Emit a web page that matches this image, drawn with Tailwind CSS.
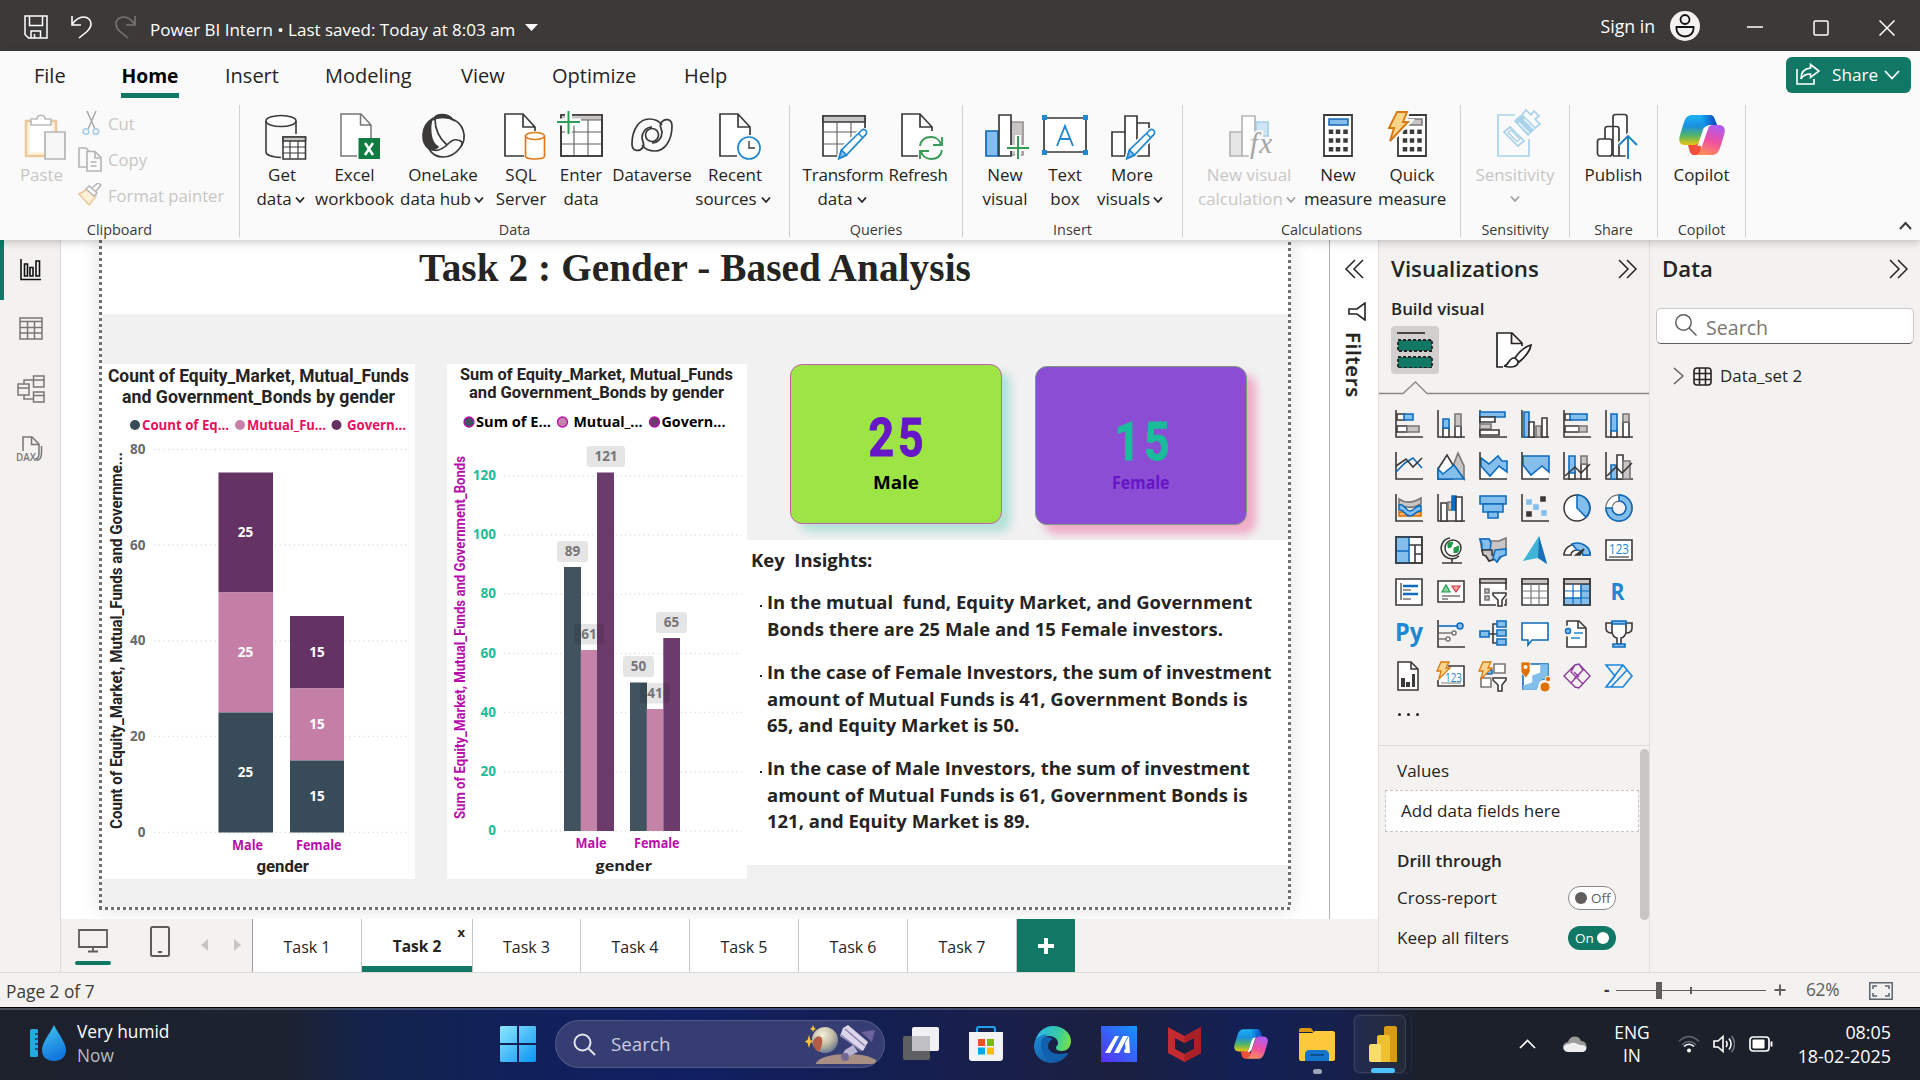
<!DOCTYPE html>
<html lang="en">
<head>
<meta charset="utf-8">
<title>Power BI Intern</title>
<script src="https://cdn.jsdelivr.net/npm/@tailwindcss/browser@4"></script>
</head>
<body class="w-[1920px] h-[1080px] overflow-hidden flex flex-col bg-[#f3f2f1] font-['Open_Sans','Noto_Sans',sans-serif] text-[#252423]">

<svg class="absolute w-0 h-0" aria-hidden="true">
  <defs>
    <linearGradient id="cpA" x1="0" y1="0" x2="0" y2="1"><stop offset="0" stop-color="#1db4f4"/><stop offset=".35" stop-color="#1a8fe0"/><stop offset=".65" stop-color="#52b46a"/><stop offset="1" stop-color="#ffc800"/></linearGradient>
    <linearGradient id="cpB" x1=".6" y1="0" x2=".3" y2="1"><stop offset="0" stop-color="#b05cf0"/><stop offset=".5" stop-color="#ee4fa0"/><stop offset="1" stop-color="#ff8f5a"/></linearGradient>
    <linearGradient id="cpC" x1="0" y1="0" x2="1" y2="0"><stop offset="0" stop-color="#12a8f0"/><stop offset="1" stop-color="#1140c0"/></linearGradient>
    <symbol id="copilot" viewBox="0 0 46 40">
      <path d="M13 0h18c3 0 4 2 5 5l2 5h-7c-4 0-6 2-7 6l-5 14c-1 3-3 0-6 0H6c-5 0-7-4-5-10L5 7C7 2 9 0 13 0z" fill="url(#cpA)"/>
      <path d="M22 0h9c3 0 4 2 5 5l2 5h-7c-3 0-5 1-6 4z" fill="url(#cpC)"/>
      <path d="M33 40H16c3-1 5-3 6-6l7-20c1-3 2-4 5-4h6c5 0 7 4 5 10l-4 13c-2 5-4 7-8 7z" fill="url(#cpB)"/>
      <path d="M16 40c-4 0-5-2-6-6l-1-4h6c3 0 5-2 6-5l1 9c-1 4-3 6-6 6z" fill="#f0503c"/>
      <path d="M24 15c1-3 3-4 6-4-1 1-1 2-2 4l-4 12c-1 3-3 4-6 4 1-1 1-2 2-4z" fill="#fff"/>
    </symbol>
    <symbol id="chev" viewBox="0 0 10 8"><path d="M1 1.500 5 6l4-4.500" fill="none" stroke="currentColor" stroke-width="1.800"/></symbol>
    <symbol id="dbl" viewBox="0 0 20 20"><path d="M1 1l9 9-9 9M9 1l9 9-9 9" fill="none" stroke="currentColor" stroke-width="1.500"/></symbol>
    <symbol id="pencil" viewBox="0 0 32 32"><path d="M1.500 31l2-9L24 2.500c1.500-1.500 3.500-1.500 5 0s1.500 3.500 0 5L9.500 28z" fill="#fafafa" stroke="#fafafa" stroke-width="4"/><path d="M2 30.500l2.500-8.500L24.500 2.500c1.200-1.200 3-1.200 4.200 0s1.200 3 0 4.200L9 27.500z" fill="#fff" stroke="#1e88d0" stroke-width="1.700"/><path d="M2 30.500l2.500-8.500 5 5z" fill="#83beec" stroke="#1e88d0"/><path d="M21.500 5.500l4.500 4.500" stroke="#1e88d0" stroke-width="1.500"/></symbol>
  </defs>
</svg>

<!-- Title bar -->
<header class="h-[51px] shrink-0 bg-[#3b3a38] text-white flex items-center">
  <svg class="w-6 h-6 ml-[24px] mt-[2px]" viewBox="0 0 24 24" fill="none" stroke="#fff" stroke-width="1.500"><path d="M1 1h22v22H4.500L1 19.500zM5.500 1v9.500h13V1M7 23v-7h9.500v7M10.500 23v-4"/></svg>
  <svg class="w-[21px] h-6 ml-[23px] mt-[2px]" viewBox="0 0 21 24" fill="none" stroke="#fff" stroke-width="1.600"><path d="M1 1v9h9M1 9.500C5 4 8 2 12.500 2 17 2 20 5 20 9c0 3-1.500 5-4 7.500L8 23"/></svg>
  <svg class="w-[21px] h-6 ml-[23px] mt-[2px]" viewBox="0 0 21 24" fill="none" stroke="#777675" stroke-width="1.600"><path d="M20 1v9h-9M20 9.500C16 4 13 2 8.500 2 4 2 1 5 1 9c0 3 1.500 5 4 7.500L13 23"/></svg>
  <div class="ml-[14px] mt-[8px] w-[365px] text-[17px] whitespace-nowrap">Power BI Intern • Last saved: Today at 8:03 am</div>
  <svg class="w-[13px] h-[7px] ml-[10px] mt-[4px]" viewBox="0 0 13 7"><path d="M0 0h13L6.500 7z" fill="#fff"/></svg>
  <div class="ml-auto text-[17.700px] mt-[2px]">Sign in</div>
  <svg class="w-[30px] h-[30px] ml-[15px] mt-[1px]" viewBox="0 0 30 30"><circle cx="15" cy="15" r="15" fill="#f3f2f1"/><circle cx="15" cy="8.500" r="4.500" fill="none" stroke="#111" stroke-width="1.800"/><path d="M6.500 16h17v2c0 4-3.500 7.500-8.500 7.500S6.500 22 6.500 18z" fill="none" stroke="#111" stroke-width="1.800"/></svg>
  <svg class="w-4 h-4 ml-[47px] mt-[3px]" viewBox="0 0 16 16"><path d="M0 8h16" stroke="#fff" stroke-width="1.500"/></svg>
  <svg class="w-4 h-4 ml-[50px] mt-[5px]" viewBox="0 0 16 16"><rect x="1" y="1" width="14" height="14" rx="1.500" fill="none" stroke="#fff" stroke-width="1.500"/></svg>
  <svg class="w-4 h-4 ml-[50px] mr-[25px] mt-[5px]" viewBox="0 0 16 16"><path d="M.5.5l15 15M15.500.5l-15 15" stroke="#fff" stroke-width="1.500"/></svg>
</header>

<!-- Ribbon -->
<div class="relative z-20 h-[189px] shrink-0 bg-[#fafafa] shadow-[0_2px_8px_rgba(0,0,0,0.22)] flex flex-col">
  <nav class="h-[51px] flex items-start pt-[11px] text-[20px] leading-[28px] whitespace-nowrap">
    <span class="ml-[34px] w-[87px]">File</span>
    <span class="w-[58px] h-[36px] border-b-[5px] border-[#117865] font-bold text-[19.300px] text-center text-black">Home</span>
    <span class="ml-[46px] w-[100px]">Insert</span>
    <span class="w-[136px]">Modeling</span>
    <span class="w-[91px]">View</span>
    <span class="w-[132px]">Optimize</span>
    <span>Help</span>
    <div class="ml-auto mr-[9px] -mt-[5px] w-[125px] h-9 rounded-md bg-[#117865] text-white flex items-center">
      <svg class="w-6 h-[22px] ml-[10px] -mt-[2px]" viewBox="0 0 24 22" fill="none" stroke="#fff" stroke-width="1.600"><path d="M1 6v15h17v-5"/><path d="M14.500 1.500 23 8l-8.500 6.500V11C10 11 7 12 5 16c0-6 3-10.500 9.500-11z"/></svg>
      <span class="ml-[12px] text-[17.200px]">Share</span>
      <svg class="w-4 h-[10px] ml-[6px]" viewBox="0 0 16 10"><path d="M1 1l7 7.500L15 1" fill="none" stroke="#fff" stroke-width="1.700"/></svg>
    </div>
  </nav>

  <div class="flex-1 flex text-[16.950px] leading-6 whitespace-nowrap">
    <!-- Clipboard -->
    <section class="w-[239px] flex flex-col">
      <div class="flex-1 flex text-[#c8c6c4]">
        <div class="ml-[19px] w-[45px] flex flex-col items-center pt-2">
          <svg class="w-12 h-[53px] overflow-visible" viewBox="0 0 48 53"><path d="M8 11h30v35H8z" fill="#fdf3dc" stroke="#ecc79a" stroke-width="2.500"/><path d="M12 15h22v27H12z" fill="#fff"/><path d="M13 15v-6h6c0-5 8-5 8 0h6v6z" fill="#fff" stroke="#bdbdbd" stroke-width="1.700"/><path d="M27 22h20v27H27z" fill="#f6f6f6" stroke="#b5b5b5" stroke-width="1.700"/></svg>
          <span>Paste</span>
        </div>
        <div class="ml-[14px] flex flex-col pt-[9px] text-[16.650px]">
          <div class="h-[36px] flex items-start gap-[6px]"><svg class="w-5 h-6 ml-1" viewBox="0 0 20 24" fill="none" stroke-width="1.500"><path d="M5 0l8 18M14 0L6 18" stroke="#a8a8a8"/><circle cx="4" cy="20.500" r="2.800" stroke="#a4cfe6"/><circle cx="14" cy="20.500" r="2.800" stroke="#a4cfe6"/></svg><span class="leading-6 mt-px">Cut</span></div>
          <div class="h-[36px] flex items-start gap-[4px]"><svg class="w-6 h-[25px]" viewBox="0 0 24 25" fill="none" stroke="#b5b5b5" stroke-width="1.600"><path d="M9 20H1V1h7l3 3M9 4.500h8l6 6V24H9z"/><path d="M17 5v6h6M12.500 15h6M12.500 19h6"/></svg><span class="leading-6 ml-[2px] mt-px">Copy</span></div>
          <div class="h-[36px] flex items-start gap-[4px]"><svg class="w-6 h-[23px]" viewBox="0 0 24 23" fill="none" stroke-width="1.500"><path d="M1 11l9-5 8 7-7 9z" fill="#fdf0d5" stroke="#ecc79a"/><path d="M8 6l3-3 8 7-3 3zM14 5l6-5 3 2-5 6" stroke="#b5b5b5" fill="#fff"/></svg><span class="leading-6 ml-[2px] mt-px">Format painter</span></div>
        </div>
      </div>
      <div class="h-5 leading-5 text-[14.400px] text-[#3b3a39] text-center">Clipboard</div>
    </section>
    <div class="w-px my-[3px] bg-[#d2d0ce]"></div>

    <!-- Data -->
    <section class="w-[549px] flex flex-col">
      <div class="flex-1 flex pl-[9px]">
        <div class="w-[66px] flex flex-col items-center pt-2"><svg class="w-12 h-[53px] overflow-visible" viewBox="0 0 48 53" fill="none" stroke="#3b3a39" stroke-width="1.600"><path d="M8 11v31c0 3 7 5 15 5.500M38 11v13"/><ellipse cx="23" cy="11" rx="15" ry="5.500" fill="#fff"/><path d="M25 27h22.500v22H25z" fill="#fff"/><path d="M25 27h22.500v4H25z" fill="#c8c6c4"/><path d="M25 37h22M25 43h22M32 31v18M40 31v18" stroke-width="1.200"/></svg><span>Get</span><span class="-ml-[3px]">data<svg class="inline w-[10px] h-2 ml-[3px]"><use href="#chev"/></svg></span></div>
        <div class="w-[79px] flex flex-col items-center pt-2"><svg class="w-12 h-[53px] overflow-visible" viewBox="0 0 48 53" fill="none" stroke="#797775" stroke-width="1.500"><path d="M26 46H10V4h20l10 11v13M29.500 4.500V15H40" fill="#fff"/><path d="M27.500 28h21.500v21H27.500z" fill="#107c41" stroke="none"/><path d="M34 33l8 12M42 33l-8 12" stroke="#fff" stroke-width="2.500"/></svg><span>Excel</span><span>workbook</span></div>
        <div class="ml-px w-[96px] flex flex-col items-center pt-2"><svg class="w-12 h-[53px] overflow-visible" viewBox="0 0 48 53"><path d="M15 8C18 3 30 3 34 10 27 6 19 8 15 8zM13 9C2 16 1 32 10 39c4 1 7 0 9-2C10 32 11 15 13 9z" fill="#3b3a39" stroke="#3b3a39" stroke-width="1.500"/><g fill="none" stroke="#3b3a39" stroke-width="1.700"><path d="M13 10C24 4 40 8 44 20c5 14-8 27-20 27-6 0-11-3-14-8"/><path d="M16 9c0 10 4 19 12 26M11 39c8 4 14-1 18-5s6-5 9-4c4 0 7 3 4 6"/></g></svg><span>OneLake</span><span class="-ml-[2px]">data hub<svg class="inline w-[10px] h-2 ml-[3px]"><use href="#chev"/></svg></span></div>
        <div class="w-[60px] flex flex-col items-center pt-2"><svg class="w-12 h-[53px] overflow-visible" viewBox="0 0 48 53" fill="none" stroke="#3b3a39" stroke-width="1.700"><path d="M27 46H8V4h18l12 13v4M26 4.500V17h12" fill="#fff"/><g stroke="#e07a1a"><path d="M28.500 26v20c0 4 19 4 19 0V26" fill="#fff"/><ellipse cx="38" cy="26" rx="9.500" ry="3.500" fill="#fff"/></g></svg><span>SQL</span><span>Server</span></div>
        <div class="w-[60px] flex flex-col items-center pt-2"><svg class="w-12 h-[53px] overflow-visible" viewBox="0 0 48 53" fill="none" stroke="#3b3a39" stroke-width="1.700"><path d="M4 5h41v41H4z" fill="#fff"/><path d="M4 5h41v5H4z" fill="#c8c6c4" stroke="none"/><path d="M4 22h41M4 34h41M17 10v36M31 10v36M4 10h41" stroke-width="1.100" stroke="#605e5c"/><path d="M4 5h41v41H4z"/><path d="M11.500 0v24M0 12h24" stroke="#fafafa" stroke-width="7"/><path d="M11.500 1v23M0 12h23" stroke="#2f9e58" stroke-width="2"/></svg><span>Enter</span><span>data</span></div>
        <div class="w-[82px] flex flex-col items-center pt-2"><svg class="w-12 h-[53px] overflow-visible" viewBox="0 0 48 53" fill="none" stroke="#3b3a39" stroke-width="1.700"><circle cx="24" cy="25" r="6.500"/><path d="M15 37c-3 5-11 5-11-3C4 20 11 9 21 9c7 0 11 3 13 6"/><path d="M33 13c3-5 11-5 11 3 0 14-7 25-17 25-7 0-11-3-13-6"/><path d="M15 37c2-2 0-4-1-9 0-6 4-11 10-11M33 13c-2 2 0 4 1 9 0 6-4 11-10 11"/></svg><span>Dataverse</span></div>
        <div class="w-[84px] flex flex-col items-center pt-2"><svg class="w-12 h-[53px] overflow-visible" viewBox="0 0 48 53" fill="none" stroke="#3b3a39" stroke-width="1.700"><path d="M26 46H9V4h18l12 13v8M27 4.500V17h12" fill="#fff"/><circle cx="38" cy="38" r="13" fill="#fafafa" stroke="none"/><circle cx="38" cy="38" r="11" fill="#fff" stroke="#1e88d0"/><path d="M38 31v7h6" stroke-width="1.400"/></svg><span>Recent</span><span class="-ml-1">sources<svg class="inline w-[10px] h-2 ml-[4px]"><use href="#chev"/></svg></span></div>
      </div>
      <div class="h-5 leading-5 text-[14.400px] text-[#3b3a39] text-center">Data</div>
    </section>
    <div class="w-px my-[3px] bg-[#d2d0ce]"></div>

    <!-- Queries -->
    <section class="w-[172px] flex flex-col">
      <div class="flex-1 flex pl-[14px]">
        <div class="w-[78px] flex flex-col items-center pt-2"><svg class="w-12 h-[53px] overflow-visible" viewBox="0 0 48 53" fill="none" stroke="#3b3a39" stroke-width="1.700"><path d="M4 6h42v40H4z" fill="#fff"/><path d="M4 6h42v6H4z" fill="#c8c6c4"/><path d="M4 22h42M4 34h42M18 12v34M32 12v34" stroke-width="1.100" stroke="#605e5c"/><path d="M24 50 50 22v28z" fill="#fafafa" stroke="none"/><use href="#pencil" x="18" y="18" width="32" height="32"/></svg><span class="tracking-[-0.2px]">Transform</span><span class="-ml-[2px]">data<svg class="inline w-[10px] h-2 ml-1"><use href="#chev"/></svg></span></div>
        <div class="w-[72px] flex flex-col items-center pt-2"><svg class="w-12 h-[53px] overflow-visible" viewBox="0 0 48 53" fill="none" stroke="#3b3a39" stroke-width="1.700"><path d="M24 46H8V4h18l12 13v4M26 4.500V17h12" fill="#fff"/><circle cx="37" cy="38" r="13" fill="#fafafa" stroke="none"/><path d="M26 36c1-6 5-9 11-9 5 0 9 3 10 8M48 27v8h-9M48 40c-1 6-5 9-11 9-5 0-9-3-10-8M26 49v-8h9" stroke="#3b9a55" stroke-width="1.900"/></svg><span class="tracking-[-0.2px]">Refresh</span></div>
      </div>
      <div class="h-5 leading-5 text-[14.400px] text-[#3b3a39] text-center">Queries</div>
    </section>
    <div class="w-px my-[3px] bg-[#d2d0ce]"></div>

    <!-- Insert -->
    <section class="w-[219px] flex flex-col">
      <div class="flex-1 flex pl-[15px]">
        <div class="w-[54px] flex flex-col items-center pt-2"><svg class="w-12 h-[53px] overflow-visible" viewBox="0 0 48 53" fill="none" stroke="#3b3a39" stroke-width="1.700"><path d="M5 21h12v25H5z" fill="#83beec" stroke="#1464b4"/><path d="M30 12h12v33H30z" fill="#c8c6c4" stroke="#979593"/><path d="M18 5h12v41H18z" fill="#fff"/><path d="M37 25v25M25 38h25" stroke="#fafafa" stroke-width="6"/><path d="M37 26v23M26 38h22" stroke="#2f9e58" stroke-width="2"/></svg><span>New</span><span>visual</span></div>
        <div class="ml-[5px] w-[56px] flex flex-col items-center pt-2"><svg class="w-12 h-[53px] overflow-visible" viewBox="0 0 48 53" fill="none"><path d="M3 8h42v34H3z" fill="#fff" stroke="#3b3a39" stroke-width="1.700"/><path d="M1 5h5v5H1zM42 5h5v5h-5zM1 40h5v5H1zM42 40h5v5h-5z" fill="#1e88d0"/><path d="M16 36l8-20 8 20M19 29h10" stroke="#1e88d0" stroke-width="1.900"/></svg><span>Text</span><span>box</span></div>
        <div class="w-[78px] flex flex-col items-center pt-2"><svg class="w-12 h-[53px] overflow-visible" viewBox="0 0 48 53" fill="#fff" stroke="#3b3a39" stroke-width="1.700"><path d="M4 22h13v24H4zM17 6h12v40H17zM29 13h12v33H29z"/><use href="#pencil" x="17" y="18" width="32" height="32"/></svg><span>More</span><span class="-ml-1">visuals<svg class="inline w-[10px] h-2 ml-[3px]"><use href="#chev"/></svg></span></div>
      </div>
      <div class="h-5 leading-5 text-[14.400px] text-[#3b3a39] text-center">Insert</div>
    </section>
    <div class="w-px my-[3px] bg-[#d2d0ce]"></div>

    <!-- Calculations -->
    <section class="w-[277px] flex flex-col">
      <div class="flex-1 flex pl-[12px]">
        <div class="w-[104px] flex flex-col items-center pt-2 text-[#c8c6c4]"><svg class="w-12 h-[53px] overflow-visible" viewBox="0 0 48 53" fill="none" stroke="#b5b5b5" stroke-width="1.700"><path d="M7 22h12v24H7z" fill="#e6e6e6"/><path d="M33 12h12v14H33z" fill="#cfe4f5" stroke="#a4cfe6"/><path d="M19 6h13v18l-4 22h-9z" fill="#fff"/><text x="27" y="43" font-family="Liberation Serif" font-style="italic" font-size="29" fill="#a5a5a5" stroke="#fafafa" stroke-width="4" paint-order="stroke" textLength="22">fx</text></svg><span class="ml-1">New visual</span><span>calculation<svg class="inline w-[10px] h-2 ml-[3px] text-[#a19f9d]"><use href="#chev"/></svg></span></div>
        <div class="ml-[4px] w-[70px] flex flex-col items-center pt-2"><svg class="w-12 h-[53px] overflow-visible" viewBox="0 0 48 53"><path d="M10 5h28v41H10z" fill="#fff" stroke="#3b3a39" stroke-width="1.800"/><path d="M15 9h19v6H15z" fill="#83beec" stroke="#1464b4" stroke-width="1.500"/><path d="M17 19.500v22M24 19.500v22M31.500 19.500v22" stroke="#3b3a39" stroke-width="4.500" stroke-dasharray="4.500 4.250"/></svg><span>New</span><span class="tracking-[-0.2px]">measure</span></div>
        <div class="ml-[4px] w-[70px] flex flex-col items-center pt-2"><svg class="w-12 h-[53px] overflow-visible" viewBox="0 0 48 53"><path d="M10 5h28v41H10z" fill="#fff" stroke="#3b3a39" stroke-width="1.800"/><path d="M15 9h19v6H15z" fill="#c8c6c4" stroke="#797775" stroke-width="1.500"/><path d="M17 19.500v22M24 19.500v22M31.500 19.500v22" stroke="#3b3a39" stroke-width="4.500" stroke-dasharray="4.500 4.250"/><path d="M9 2h10l-4 10h5L2 31l4-13H1z" fill="#fbd58c" stroke="#fafafa" stroke-width="6"/><path d="M9 2h10l-4 10h5L2 31l4-13H1z" fill="#fbd58c" stroke="#d9780f" stroke-width="1.900"/></svg><span>Quick</span><span class="tracking-[-0.2px]">measure</span></div>
      </div>
      <div class="h-5 leading-5 text-[14.400px] text-[#3b3a39] text-center">Calculations</div>
    </section>
    <div class="w-px my-[3px] bg-[#d2d0ce]"></div>

    <!-- Sensitivity -->
    <section class="w-[108px] flex flex-col">
      <div class="flex-1 flex flex-col items-center pt-2 text-[#c8c6c4]"><svg class="w-12 h-[53px] overflow-visible -ml-[3px]" viewBox="0 0 48 53" fill="none" stroke="#a9d3e8" stroke-width="1.700"><path d="M25 5H8v41h31V29"/><path d="M14 22l6-5 14 14-6 5z"/><path d="M18 22.500l3-2.500 9 9-3 2.500z" stroke-width="1.300"/><path d="M25 11l6-5 13 13-6 6z" fill="#a9d3e8"/><path d="M32 5l4-5 5 5 3-4 5 5-4 3 5 5-5 4z" fill="#fafafa"/><path d="M29 13l10 10M34 9l10 10" stroke="#fafafa" stroke-width="1.200"/></svg><span>Sensitivity</span><svg class="w-[10px] h-2 mt-2 text-[#a19f9d]"><use href="#chev"/></svg></div>
      <div class="h-5 leading-5 text-[14.400px] text-[#3b3a39] text-center">Sensitivity</div>
    </section>
    <div class="w-px my-[3px] bg-[#d2d0ce]"></div>

    <!-- Share -->
    <section class="w-[87px] flex flex-col">
      <div class="flex-1 flex flex-col items-center pt-2"><svg class="w-12 h-[53px] overflow-visible" viewBox="0 0 48 53" fill="#fff" stroke="#3b3a39" stroke-width="1.700"><path d="M23 46V7c0-1.500 1-2.500 2.500-2.500h9c1.500 0 2.500 1 2.500 2.500v20M37 36v10H23M15 46V19c0-1.500 1-2.500 2.500-2.500h9c1.500 0 2.500 1 2.500 2.500v27"/><rect x="7.500" y="29" width="14.500" height="17" rx="2.500"/><path d="M29 35l9-9 9 9M38 26v23" fill="none" stroke="#fafafa" stroke-width="5"/><path d="M29 35l9-9 9 9M38 26v23" fill="none" stroke="#1b7fc0" stroke-width="1.900"/></svg><span>Publish</span></div>
      <div class="h-5 leading-5 text-[14.400px] text-[#3b3a39] text-center">Share</div>
    </section>
    <div class="w-px my-[3px] bg-[#d2d0ce]"></div>

    <!-- Copilot -->
    <section class="w-[87px] flex flex-col">
      <div class="flex-1 flex flex-col items-center pt-2"><svg class="w-[46px] h-10 mt-[5px] mb-[8px]"><use href="#copilot"/></svg><span>Copilot</span></div>
      <div class="h-5 leading-5 text-[14.400px] text-[#3b3a39] text-center">Copilot</div>
    </section>
    <div class="w-px my-[3px] bg-[#d2d0ce]"></div>
    <svg class="w-[13px] h-[9px] ml-auto mr-[8px] self-end mb-[10px]" viewBox="0 0 13 9"><path d="M1 8l5.500-6L12 8" fill="none" stroke="#3b3a39" stroke-width="2"/></svg>
  </div>
</div>

<!-- Workspace -->
<div class="h-[732px] shrink-0 flex">
  <!-- View rail -->
  <aside class="w-[61px] border-r border-[#dddbd9] relative flex flex-col items-center">
    <div class="absolute left-0 top-0 w-1 h-[60px] bg-[#117865]"></div>
    <svg class="w-[22px] h-[22px] mt-[19px] ml-[2px]" viewBox="0 0 22 22" fill="none" stroke="#111" stroke-width="1.600"><path d="M1 0v20.500h20"/><path d="M4.500 5h3v12h-3zM10 8.500h3V17h-3zM16 2h3.500v15H16z"/></svg>
    <svg class="w-6 h-[23px] mt-[36px] ml-[2px]" viewBox="0 0 24 23" fill="none" stroke="#797775" stroke-width="1.500"><path d="M1 1h22v21H1zM1 4.500h22M1 10.500h22M1 16h22M8.500 4.500V22M15.500 4.500V22"/></svg>
    <svg class="w-7 h-7 mt-[35px] ml-[2px]" viewBox="0 0 28 28" fill="none" stroke="#797775" stroke-width="1.500"><path d="M16.500 1h10.500v11H16.500zM16.500 5H27M1 9h11v11H1zM1 13h11M16.500 17H27v10H16.500zM16.500 20.500H27M7 9V5h9.500M7 20v4h9.500"/></svg>
    <svg class="w-7 h-[26px] mt-[33px]" viewBox="0 0 28 26" fill="none" stroke="#797775" stroke-width="1.500"><path d="M7 15V1h9l7 7v9c0 4-2 6-4 6M15.500 1v7.500H23M25.500 10v7c0 4-2 7-5 7.500"/><text x="0" y="24.500" font-family="Open Sans" font-size="11" font-weight="600" fill="#797775" stroke="none" textLength="20" lengthAdjust="spacingAndGlyphs">DAX</text></svg>
  </aside>

  <!-- Report and page tabs -->
  <main class="w-[1317px] flex flex-col">
    <div class="h-[679px] flex bg-white overflow-hidden">
      <div class="relative w-[1268px]">
        <!-- Report page -->
        <div class="absolute left-[38px] top-0 w-[1192px] h-[670px] shadow-[0_0_18px_rgba(0,0,0,0.12)] bg-[#f1f1f1]">
          <div class="absolute inset-x-0 top-0 h-[74px] pt-[2px] bg-white flex justify-center">
            <h1 class="font-['Liberation_Serif',serif] font-bold text-[39.200px] leading-[52px] whitespace-nowrap text-[#252423] tracking-[0.1px]">Task 2 : Gender - Based Analysis</h1>
          </div>

          <!-- Count chart -->
          <svg class="absolute left-[3px] top-[124px] w-[313px] h-[515px] bg-white overflow-visible" viewBox="102 364 313 515" font-family="Open Sans" font-weight="700" font-size="13.500">
            <g font-family="Roboto" font-size="17.500" fill="#252423"><text x="108" y="381.500" textLength="301" lengthAdjust="spacingAndGlyphs">Count of Equity_Market, Mutual_Funds</text><text x="122" y="402.500" textLength="273" lengthAdjust="spacingAndGlyphs">and Government_Bonds by gender</text></g>
            <circle cx="135" cy="425" r="5" fill="#374b58"/><circle cx="240" cy="425" r="5" fill="#c780a8"/><circle cx="336.500" cy="425" r="5" fill="#653363"/>
            <g fill="#e6115d"><text x="142" y="430" textLength="87" lengthAdjust="spacingAndGlyphs">Count of Eq...</text><text x="247" y="430" textLength="79" lengthAdjust="spacingAndGlyphs">Mutual_Fu...</text><text x="347" y="430" textLength="59" lengthAdjust="spacingAndGlyphs">Govern...</text></g>
            <g fill="#6b6a69" text-anchor="end"><text x="145.500" y="453.500">80</text><text x="145.500" y="549.500">60</text><text x="145.500" y="645">40</text><text x="145.500" y="741">20</text><text x="145.500" y="837">0</text></g>
            <path d="M154 449.500h256M154 545h256M154 641h256M154 736.500h256M154 832.500h256" stroke="#e0e0e0" stroke-width="1.300" stroke-dasharray="1.300 3.350"/>
            <path d="M218.500 472.500H273v120h-54.500zM290 616h54v72.500h-54z" fill="#653363"/>
            <path d="M218.500 592.500H273v120h-54.500zM290 688.500h54v72h-54z" fill="#c57fa7"/>
            <path d="M218.500 712.500H273v120h-54.500zM290 760.500h54v72h-54z" fill="#374b58"/>
            <g fill="#fff" text-anchor="middle"><text x="245.500" y="537">25</text><text x="245.500" y="657">25</text><text x="245.500" y="777">25</text><text x="317" y="657">15</text><text x="317" y="729">15</text><text x="317" y="801">15</text></g>
            <g fill="#b80cac"><text x="232" y="850" textLength="31" lengthAdjust="spacingAndGlyphs">Male</text><text x="296" y="850" textLength="45.500" lengthAdjust="spacingAndGlyphs">Female</text></g>
            <g font-family="Roboto" font-size="16" fill="#252423"><text x="256.500" y="872" textLength="52.500" lengthAdjust="spacingAndGlyphs">gender</text><text transform="translate(121.500 829) rotate(-90)" font-size="16.500" textLength="377" lengthAdjust="spacingAndGlyphs">Count of Equity_Market, Mutual_Funds and Governme...</text></g>
          </svg>

          <!-- Sum chart -->
          <svg class="absolute left-[348px] top-[124px] w-[300px] h-[515px] bg-white overflow-visible" viewBox="447 364 300 515" font-family="Open Sans" font-weight="700" font-size="13.500">
            <g font-family="Roboto" font-size="16.500" fill="#252423"><text x="460" y="380" textLength="273" lengthAdjust="spacingAndGlyphs">Sum of Equity_Market, Mutual_Funds</text><text x="469" y="398" textLength="255" lengthAdjust="spacingAndGlyphs">and Government_Bonds by gender</text></g>
            <g stroke="#b80cac" stroke-width="1.300"><circle cx="469" cy="422" r="5" fill="#40535f"/><circle cx="562.500" cy="422" r="5" fill="#c583a8"/><circle cx="654.500" cy="422" r="5" fill="#6b3b6b"/></g>
            <g fill="#000" font-size="14"><text x="476" y="427" textLength="75" lengthAdjust="spacingAndGlyphs">Sum of E...</text><text x="573.500" y="427" textLength="69" lengthAdjust="spacingAndGlyphs">Mutual_...</text><text x="661.500" y="427" textLength="64" lengthAdjust="spacingAndGlyphs">Govern...</text></g>
            <g fill="#1bbc9b" text-anchor="end"><text x="496" y="480">120</text><text x="496" y="539">100</text><text x="496" y="598">80</text><text x="496" y="658">60</text><text x="496" y="717">40</text><text x="496" y="776">20</text><text x="496" y="835">0</text></g>
            <path d="M504 476h238M504 535h238M504 594h238M504 653.500h238M504 712.500h238M504 772h238M504 831h238" stroke="#e0e0e0" stroke-width="1.300" stroke-dasharray="1.300 3.350"/>
            <path d="M564 567h17v264h-17zM630 682.500h17V831h-17z" fill="#40535f"/>
            <path d="M580.700 650h16.500v181h-16.500zM646.700 709h16.500v122h-16.500z" fill="#c583a8"/>
            <path d="M597 472.500h17V831h-17zM663.300 638H680v193h-16.700z" fill="#6b3b6b"/>
            <g fill="#000" fill-opacity=".1"><rect x="586.500" y="446" width="38.500" height="21" rx="3"/><rect x="557" y="541" width="31" height="21" rx="3"/><rect x="574" y="624" width="30" height="20.500" rx="3"/><rect x="656" y="612" width="31" height="21" rx="3"/><rect x="623" y="656" width="31" height="21" rx="3"/><rect x="640" y="683" width="30" height="20.500" rx="3"/></g>
            <g fill="#77757a" text-anchor="middle"><text x="606" y="461">121</text><text x="572.500" y="556">89</text><text x="589" y="639">61</text><text x="671.500" y="627">65</text><text x="638.500" y="671">50</text><text x="655" y="698">41</text></g>
            <g fill="#b80cac"><text x="575.500" y="848" textLength="31" lengthAdjust="spacingAndGlyphs">Male</text><text x="634" y="848" textLength="45.500" lengthAdjust="spacingAndGlyphs">Female</text><text transform="translate(464.500 819) rotate(-90)" font-family="Roboto" font-size="15" textLength="363" lengthAdjust="spacingAndGlyphs">Sum of Equity_Market, Mutual_Funds and Government_Bonds</text></g>
            <text x="595.500" y="871" font-size="15" fill="#252423" textLength="56.500" lengthAdjust="spacingAndGlyphs">gender</text>
          </svg>

          <!-- Cards -->
          <div class="absolute left-[691px] top-[124px] w-[212px] h-[160px] rounded-xl border border-[#c163a8] bg-[#9de545] shadow-[9px_8px_8px_rgba(27,188,155,0.28)]">
            <svg class="w-full h-full" viewBox="791 365 210 158" font-weight="700"><text transform="translate(868.500 456) scale(.84 1)" font-family="Roboto" font-size="53" letter-spacing="4.800" fill="#6617c7" stroke="#6617c7" stroke-width="1">25</text><text x="873" y="489" font-family="Open Sans" font-size="18.500" fill="#000" textLength="46" lengthAdjust="spacingAndGlyphs">Male</text></svg>
          </div>
          <div class="absolute left-[936px] top-[126px] w-[212px] h-[159px] rounded-xl border border-[#7f9a80] bg-[#8b4dd3] shadow-[9px_9px_8px_rgba(240,60,130,0.38)]">
            <svg class="w-full h-full" viewBox="1036 367 210 157" font-weight="700"><text transform="translate(1114.500 460) scale(.84 1)" font-family="Roboto" font-size="53" letter-spacing="4.800" fill="#1bbc9b" stroke="#1bbc9b" stroke-width="1">15</text><text x="1112" y="489" font-family="Open Sans" font-size="17.500" fill="#6514c6" textLength="57.500" lengthAdjust="spacingAndGlyphs">Female</text></svg>
          </div>

          <!-- Insights -->
          <div class="absolute left-[648px] top-[300px] w-[541px] h-[325px] bg-white pl-[4px] font-bold text-[18.480px] leading-[26.400px] text-[#252423]">
            <p class="mt-[7px] whitespace-pre">Key  Insights:</p>
            <ul class="mt-[16px] pl-4 flex flex-col gap-[17px]">
              <li class="relative whitespace-pre before:absolute before:-left-[7px] before:top-[16px] before:w-[2px] before:h-[2px] before:bg-[#252423]">In the mutual  fund, Equity Market, and Government
Bonds there are 25 Male and 15 Female investors.</li>
              <li class="relative whitespace-pre before:absolute before:-left-[7px] before:top-[16px] before:w-[2px] before:h-[2px] before:bg-[#252423]">In the case of Female Investors, the sum of investment
amount of Mutual Funds is 41, Government Bonds is
65, and Equity Market is 50.</li>
              <li class="relative whitespace-pre before:absolute before:-left-[7px] before:top-[16px] before:w-[2px] before:h-[2px] before:bg-[#252423]">In the case of Male Investors, the sum of investment
amount of Mutual Funds is 61, Government Bonds is
121, and Equity Market is 89.</li>
            </ul>
          </div>

          <!-- Page outline -->
          <div class="absolute left-0 top-0 w-[3px] h-full bg-[repeating-linear-gradient(to_bottom,#6f6e75_0_3px,#fff_3px_6px)]"></div>
          <div class="absolute right-0 top-0 w-[3px] h-full bg-[repeating-linear-gradient(to_bottom,#fff_0_2px,#6f6e75_2px_5px,#fff_5px_6px)]"></div>
          <div class="absolute left-0 bottom-0 w-full h-[3px] bg-[repeating-linear-gradient(to_right,#6f6e75_0_3px,#fff_3px_6px)]"></div>
        </div>
      </div>
      <!-- Collapsed filter pane -->
      <div class="relative z-10 w-[49px] border-l border-[#b3b0ad] bg-white flex flex-col items-center">
        <svg class="w-5 h-5 mt-[19px] rotate-180"><use href="#dbl"/></svg>
        <svg class="w-[18px] h-[19px] mt-[23px] ml-[5px]" viewBox="0 0 18 19"><path d="M17 1v17l-8-6H1V7h8z" fill="none" stroke="#252423" stroke-width="1.600"/></svg>
        <div class="mt-[11px] [writing-mode:vertical-rl] font-semibold text-[20.300px] tracking-[0.8px] leading-6 [-webkit-text-stroke:0.3px_#252423]">Filters</div>
      </div>
    </div>
    <!-- Page tabs -->
    <div class="h-[53px] flex items-stretch text-base">
      <div class="w-[192px] border-r border-[#a19f9d] flex">
        <div class="ml-[14px] w-9 flex flex-col items-center pt-[10px]"><svg class="w-[30px] h-[24px]" viewBox="0 0 30 24" fill="none" stroke="#5f5d5b" stroke-width="1.800"><path d="M1 1h28v17H1zM15 18v4M10 22.500h10"/></svg><div class="mt-[8px] h-1 w-9 rounded-full bg-[#117865]"></div></div>
        <svg class="w-5 h-[31px] ml-[39px] mt-[7px]" viewBox="0 0 20 31" fill="none" stroke="#5f5d5b" stroke-width="2"><rect x="1" y="1" width="18" height="29" rx="1.500"/><path d="M8 26h4"/></svg>
        <svg class="w-[7px] h-3 ml-[31px] mt-5" viewBox="0 0 7 12"><path d="M7 0v12L0 6z" fill="#c8c6c4"/></svg>
        <svg class="w-[7px] h-3 ml-[26px] mt-5" viewBox="0 0 7 12"><path d="M0 0v12l7-6z" fill="#c8c6c4"/></svg>
      </div>
      <div class="w-[109px] bg-white border-r border-[#c8c6c4] flex items-center justify-center pt-[2px]">Task 1</div>
      <div class="relative w-[111px] bg-white border-r border-[#c8c6c4] flex items-center justify-center pt-[2px] font-bold text-[15.500px]">Task 2<span class="absolute right-[7px] top-[4px] text-[13px]">x</span><div class="absolute inset-x-0 bottom-0 h-[6px] bg-[#117865]"></div></div>
      <div class="w-[108px] bg-white border-r border-[#c8c6c4] flex items-center justify-center pt-[2px]">Task 3</div>
      <div class="w-[109px] bg-white border-r border-[#c8c6c4] flex items-center justify-center pt-[2px]">Task 4</div>
      <div class="w-[109px] bg-white border-r border-[#c8c6c4] flex items-center justify-center pt-[2px]">Task 5</div>
      <div class="w-[109px] bg-white border-r border-[#c8c6c4] flex items-center justify-center pt-[2px]">Task 6</div>
      <div class="w-[109px] bg-white border-r border-[#c8c6c4] flex items-center justify-center pt-[2px]">Task 7</div>
      <div class="w-[58px] bg-[#117865] flex items-center justify-center"><svg class="w-4 h-4" viewBox="0 0 16 16"><path d="M8 0v16M0 8h16" stroke="#fff" stroke-width="4"/></svg></div>
    </div>
  </main>

  <!-- Visualizations -->
  <aside class="w-[272px] border-x border-[#e1dfdd] flex flex-col relative">
    <div class="h-[58px] flex items-center pl-[12px] pr-[11px]"><h2 class="text-[22.300px] font-semibold">Visualizations</h2><svg class="w-5 h-5 ml-auto"><use href="#dbl"/></svg></div>
    <div class="pl-[12px] h-[28px] leading-[22px] text-[16.900px] font-semibold">Build visual</div>
    <div class="h-[66px] flex pl-[12px]">
      <div class="w-12 h-12 rounded bg-[#d2d0ce] flex items-center justify-center"><svg class="w-9 h-9" viewBox="0 0 36 36"><path d="M0 1h28" stroke="#252423" stroke-width="1.600"/><path d="M1 8h34v11H1zM1 25h34v11H1z" fill="#117865" stroke="#252423" stroke-width="1.800" stroke-dasharray="3 2"/></svg></div>
      <svg class="w-9 h-9 ml-[57px] mt-[6px]" viewBox="0 0 36 36" fill="none" stroke="#252423" stroke-width="1.700"><path d="M7 35H1V1h15l10 10v3M15.500 1v10.500H26" fill="#fff"/><path d="M8 34c5 0 4-8 10-8 3 0 5 2 4 5-1 4-8 5-14 3z" fill="#fff"/><path d="M19 26c4-6 9-11 16-13-1 6-6 12-12 17z" fill="#fff"/></svg>
    </div>
    <svg class="w-[270px] h-[14px] -mt-[11px]" viewBox="0 0 270 14"><path d="M0 12.500h24L36.500 1 48 12.500h222" fill="none" stroke="#8a8886" stroke-width="1.300"/></svg>
    <div id="visuals" class="mt-[15px] ml-[16px] grid grid-cols-6 gap-[14px] w-[238px]"></div>
    <div class="ml-[19px] mt-[12px] h-6 flex items-center gap-[6px]"><i class="w-[3px] h-[3px] rounded-full bg-[#252423]"></i><i class="w-[3px] h-[3px] rounded-full bg-[#252423]"></i><i class="w-[3px] h-[3px] rounded-full bg-[#252423]"></i></div>
    <div class="absolute left-0 right-0 top-[505px] bottom-0 border-t border-[#dddbd9] text-[17.050px]">
      <div class="absolute right-0 top-[3px] w-[9px] h-[171px] rounded-full bg-[#c8c6c4]"></div>
      <div class="mt-[13px] ml-[18px] h-6 leading-6">Values</div>
      <div class="mt-[7px] ml-[6px] w-[254px] h-[42px] bg-white border border-dashed border-[#c8c6c4] flex items-center pl-[15px]">Add data fields here</div>
      <div class="mt-[17px] ml-[18px] h-6 leading-6 font-semibold text-[17px]">Drill through</div>
      <div class="mt-[13px] ml-[18px] w-[219px] h-6 flex items-center justify-between"><span>Cross-report</span><span class="w-12 h-6 rounded-full border border-[#8a8886] bg-white flex items-center pl-[6px] text-[13.500px] text-[#605e5c]"><i class="w-[12px] h-[12px] rounded-full bg-[#605e5c] mr-[4px]"></i>Off</span></div>
      <div class="mt-[16px] ml-[18px] w-[219px] h-6 flex items-center justify-between"><span>Keep all filters</span><span class="w-12 h-6 rounded-full bg-[#117865] flex items-center justify-between pl-[7px] pr-[7px] text-[13.500px] text-white">On<i class="w-[12px] h-[12px] rounded-full bg-white"></i></span></div>
    </div>
  </aside>

  <!-- Data -->
  <aside class="flex-1 flex flex-col">
    <div class="h-[58px] flex items-center pl-[12px] pr-[11px]"><h2 class="text-[22.200px] font-semibold">Data</h2><svg class="w-5 h-5 ml-auto"><use href="#dbl"/></svg></div>
    <div class="mt-[10px] ml-[6px] w-[258px] h-[36px] rounded-[5px] border border-[#c8c6c4] border-b-[#605e5c] bg-white flex items-center pl-[18px] text-[19.600px] text-[#7a7876]"><svg class="w-[22px] h-[22px] mr-[9px] -mt-[2px]" viewBox="0 0 22 22" fill="none" stroke="#605e5c" stroke-width="1.500"><circle cx="8.500" cy="8.500" r="7.700"/><path d="M14 14l7.500 7.500"/></svg><span class="mt-[3px]">Search</span></div>
    <div class="mt-[20px] ml-[23px] h-6 flex items-center text-[16.900px]"><svg class="w-[11px] h-[18px]" viewBox="0 0 11 18"><path d="M1 1l9 8-9 8" fill="none" stroke="#605e5c" stroke-width="1.500"/></svg><svg class="w-[19px] h-[19px] ml-[9px] mr-[8px]" viewBox="0 0 19 19" fill="none" stroke="#252423" stroke-width="1.600"><rect x="1" y="1" width="17" height="17" rx="3"/><path d="M6.500 1v17M12.500 1v17M1 6.500h17M1 12.500h17"/></svg>Data_set 2</div>
  </aside>
</div>

<!-- Status bar -->
<footer class="h-[35px] shrink-0 border-t border-[#dddbd9] flex items-center text-[#3b3a39]">
  <span class="ml-[6px] mt-[4px] text-[17.300px]">Page 2 of 7</span>
  <span class="ml-auto font-bold text-[17px] w-[12px]">-</span>
  <svg class="w-[150px] h-[17px]" viewBox="0 0 150 17"><path d="M0 8.500h150" stroke="#605e5c" stroke-width="1.200"/><path d="M40 0h6v17h-6zM74 5h2v7h-2z" fill="#605e5c"/></svg>
  <svg class="w-3 h-3 ml-[8px]" viewBox="0 0 12 12"><path d="M6 .5v11M.5 6h11" stroke="#605e5c" stroke-width="1.900"/></svg>
  <span class="ml-[20px] text-[17.300px] tracking-[-0.3px] text-[#605e5c] w-[35px]">62%</span>
  <svg class="w-6 h-[18px] ml-[28px] mr-[27px] mt-[2px]" viewBox="0 0 24 18" fill="none" stroke="#5b6470" stroke-width="1.500"><path d="M.8.8h22.400v16.400H.8zM4 7V4h4M16 4h4v3M20 11v3h-4M8 14H4v-3"/></svg>
</footer>

<!-- Taskbar -->
<div class="h-[73px] shrink-0 border-t border-black text-white bg-[linear-gradient(90deg,#1c212c_0%,#1c2230_15%,#13234c_19%,#11205a_27%,#111f63_36%,#131f52_45%,#181f4a_52%,#1b2040_58%,#132055_65%,#16204a_70%,#1b202b_74%,#1b202b_100%)]">
  <div class="h-full border-t-2 border-white/20 flex items-center pb-[2px]">
    <svg class="w-[36px] h-[36px] ml-[30px] -mt-[2px]" viewBox="0 0 36 36"><defs><linearGradient id="drop" x1="0" y1="0" x2=".3" y2="1"><stop offset="0" stop-color="#41c6f2"/><stop offset="1" stop-color="#1377dd"/></linearGradient></defs><rect x="0" y="4" width="8" height="28" rx="1.500" fill="#2aa7e0"/><path d="M5 9h3M5 14h3M5 19h3M5 24h3" stroke="#173b58" stroke-width="1.500"/><path d="M24 0c3 7 12 17 12 25 0 7-5 11-12 11s-12-4-12-11C12 17 21 7 24 0z" fill="url(#drop)"/></svg>
    <div class="ml-[11px] leading-[24px] text-[17.300px] w-[100px] whitespace-nowrap">Very humid<br><span class="text-[#b9bcc2]">Now</span></div>
    <svg class="w-[36px] h-[36px] ml-[323px]" viewBox="0 0 36 36"><defs><linearGradient id="win" x1="0" y1="0" x2="1" y2="1"><stop offset="0" stop-color="#8be9fc"/><stop offset="1" stop-color="#0a93f5"/></linearGradient></defs><path d="M1 0h16v17H0V1zM19 0h16l1 1v16H19zM0 19h17v17H1l-1-1zM19 19h17v16l-1 1H19z" fill="url(#win)"/></svg>
    <div class="ml-[19px] w-[330px] h-12 rounded-full border border-white/15 bg-[#353d72] flex items-center pl-[17px] text-[18.800px] text-[#c9cde0]">
      <svg class="w-[23px] h-[23px] mr-[15px]" viewBox="0 0 23 23" fill="none" stroke="#e4e6f0" stroke-width="2"><circle cx="9.500" cy="9.500" r="8"/><path d="M15.500 15.500l6.500 6.500"/></svg><span class="mt-px">Search</span>
      <svg class="ml-auto mr-[5px] w-[74px] h-[42px]" viewBox="0 0 74 42"><defs><radialGradient id="ball" cx=".4" cy=".3" r=".8"><stop offset="0" stop-color="#f5f0dc"/><stop offset=".5" stop-color="#c3bda5"/><stop offset="1" stop-color="#54698c"/></radialGradient></defs><path d="M4 12l1.500 5 3 1.500-3 1.500L4 25l-1.500-5-3-1.500 3-1.500z" fill="#f3c33c"/><path d="M8 2l1 2.500L11 6 9 7 8 9 7 7 5 6l2-1.500z" fill="#f3c33c"/><circle cx="20" cy="17" r="13" fill="url(#ball)"/><path d="M8 18c3-6 8-6 9-2s-1 9-3 13c-4-2-6-6-6-11z" fill="#b35b45"/><path d="M11 40c6-11 48-12 60-3 0 3-2 4-5 4H14c-3 0-4 0-3-1z" fill="#a98f83"/><path d="M38 5l5-3 20 17-5 9L35 13z" fill="#dcd6ec"/><path d="M40 6l20 17M36 12l20 16" stroke="#8a81ad" stroke-width="1.500"/><path d="M56 9l14-2-3 12z" fill="#6d649d"/><path d="M48 22l-8 5-4 7 5 4 5-6 7-3z" fill="#b9b3d2"/><circle cx="40" cy="34" r="4" fill="#6f6892"/></svg>
    </div>
    <svg class="w-[36px] h-[36px] ml-[18px] -mt-[2px]" viewBox="0 0 36 36"><rect x="0" y="11" width="27" height="24" rx="2" fill="#5e5f63"/><rect x="9" y="2" width="27" height="24" rx="2" fill="#f1f1f3"/><path d="M9 11h18v15H9z" fill="#c0c0c3"/></svg>
    <svg class="w-[36px] h-[36px] ml-[29px]" viewBox="0 0 36 36"><path d="M9 8V3c0-1 1-2 2-2h14c1 0 2 1 2 2v5" fill="none" stroke="#1ea0e6" stroke-width="2.200"/><path d="M1 6h34v26c0 2-1 3-3 3H4c-2 0-3-1-3-3z" fill="#f2f3f5"/><path d="M10 13h7v7h-7z" fill="#f25022"/><path d="M19 13h7v7h-7z" fill="#7fba00"/><path d="M10 21.500h7v7h-7z" fill="#00a4ef"/><path d="M19 21.500h7v7h-7z" fill="#ffb900"/></svg>
    <svg class="w-[37px] h-[37px] ml-[30px]" viewBox="0 0 37 37"><defs><linearGradient id="eg" x1="0" y1=".3" x2="1" y2=".5"><stop offset="0" stop-color="#2fb5ee"/><stop offset=".6" stop-color="#35c9a8"/><stop offset="1" stop-color="#73e04b"/></linearGradient><linearGradient id="eb" x1="0" y1="0" x2="1" y2="1"><stop offset="0" stop-color="#1c8fd8"/><stop offset="1" stop-color="#0f4d98"/></linearGradient></defs><path d="M1 17C2 7 10 0 19 0c10 0 18 7 18 15 0 6-4 10-9 10-4 0-6-1-6-3s2-2 2-5c0-4-4-7-9-7-7 0-11 4-14 7z" fill="url(#eg)"/><path d="M0 20c0-7 6-12 14-12-4 2-6 6-6 11 0 8 6 14 13 15 5 1 9-2 11-4-2 4-8 7-14 7C8 37 0 30 0 20z" fill="url(#eb)"/><path d="M14 20c0-3 2-6 5-7-3-2-8-3-11 0-2 4-1 13 4 18 6 6 14 5 19 0 3-2 4-4 2-4-11 3-19-1-19-7z" fill="#1261ae"/></svg>
    <svg class="w-[36px] h-[36px] ml-[30px]" viewBox="0 0 36 36"><defs><linearGradient id="ma" x1="0" y1="1" x2="1" y2="0"><stop offset="0" stop-color="#5a2df0"/><stop offset="1" stop-color="#1496ff"/></linearGradient></defs><rect width="36" height="36" fill="url(#ma)"/><path d="M4 27L14 10h4L9 27zM13 27l9-17h5l-9 17zM24 17l4-7 1 17h-4z" fill="#fff"/><circle cx="25" cy="25" r="2" fill="#fff"/></svg>
    <svg class="w-[33px] h-[36px] ml-[31px]" viewBox="0 0 33 36"><path d="M0 1l16.500 9L33 1v26l-16.500 9L0 27z" fill="#c42b30"/><path d="M7 12l9.500 5L26 12v11l-9.500 5L7 23z" fill="#191f40"/><path d="M16.500 10L33 1v26l-16.500 9v-8l9.500-5V12l-9.500 5z" fill="#a92127"/></svg>
    <svg class="w-[34px] h-[30px] ml-[33px]"><use href="#copilot"/></svg>
    <div class="relative ml-[31px] h-[60px] w-[36px] flex items-center"><svg class="w-9 h-9" viewBox="0 0 36 36"><path d="M0 4c0-1 1-2 2-2h10l3 4H0z" fill="#d9950b"/><path d="M0 7h13l3-2h18c1 0 2 1 2 2v26c0 1-1 2-2 2H2c-1 0-2-1-2-2z" fill="#fbc93a"/><path d="M6 35v-7c0-2 2-4 4-4h16c2 0 4 2 4 4v7z" fill="#1376cc"/><path d="M11 29h14" stroke="#0a4a90" stroke-width="1.800"/></svg><i class="absolute left-[14px] bottom-0 w-[9px] h-[5px] rounded-full bg-[#9ea3b5]"></i></div>
    <div class="relative ml-[18px] w-[59px] h-[60px] rounded-md border border-white/5 flex items-center"><div class="w-[52px] h-[58px] rounded-md border border-white/10 bg-white/5 flex items-center pl-[14px]"><svg class="w-7 h-9" viewBox="0 0 28 36"><path d="M15 2c0-1 1-2 2-2h9c1 0 2 1 2 2v34H15z" fill="#d99a15"/><path d="M8 11c0-1 1-2 2-2h9c1 0 2 1 2 2v25H8z" fill="#efc02f"/><path d="M0 20c0-1 1-2 2-2h8c1 0 2 1 2 2v16H2c-1 0-2-1-2-2z" fill="#f7dc6d"/></svg></div><i class="absolute left-[17px] bottom-0 w-6 h-[5px] rounded-full bg-[#4cc2ff]"></i></div>
    <svg class="w-[17px] h-[10px] ml-[107px]" viewBox="0 0 17 10"><path d="M1 9l7.500-7.500L16 9" fill="none" stroke="#fff" stroke-width="1.700"/></svg>
    <svg class="w-[24px] h-[17px] ml-[27px]" viewBox="0 0 24 17"><path d="M6 16c-8 0-8-9-1-10C7-1 16-1 18 5c7 0 8 11 0 11z" fill="#9b9b9b"/><path d="M6 16c-7 0-7-8 0-8 5-3 9 0 11 1 8-1 8 7 2 7z" fill="#eee"/></svg>
    <div class="ml-[27px] w-[36px] flex justify-center text-center text-[17.400px] leading-[23px]">ENG<br>IN</div>
    <svg class="w-[22px] h-[18px] ml-[28px]" viewBox="0 0 22 18" fill="none" stroke-width="1.700"><path d="M1 6.500c6-6.500 14-6.500 20 0" stroke="#5c6069"/><path d="M4 10c4-4.500 10-4.500 14 0" stroke="#5c6069"/><path d="M6 11.500c3-3 7-3 10 0" stroke="#fff"/><circle cx="11" cy="15.500" r="2" fill="#fff"/></svg>
    <svg class="w-[22px] h-[20px] ml-[13px]" viewBox="0 0 22 20" fill="none" stroke="#fff" stroke-width="1.600"><path d="M1 7v6h4l5 4.500v-15L5 7z"/><path d="M13 7c1.500 2 1.500 4 0 6M16 4.500c3 4 3 7 0 11"/><path d="M18.500 2c4 5 4 11 0 16" stroke="#6f737b"/></svg>
    <svg class="w-[24px] h-[16px] ml-[14px]" viewBox="0 0 24 16"><rect x="1" y="1" width="19" height="14" rx="3" fill="none" stroke="#fff" stroke-width="1.700"/><rect x="3.500" y="3.500" width="12" height="9" rx="1" fill="#fff"/><path d="M22.500 5.500v5" stroke="#fff" stroke-width="2"/></svg>
    <div class="ml-auto mr-[29px] text-right text-[17.900px] leading-[24px] whitespace-nowrap">08:05<br>18-02-2025</div>
  </div>
</div>

<script>
  // Visual picker icons, drawn on a 28 x 28 grid.
  const K = '#3b3a39', G = '#c8c6c4', GS = '#797775', B = '#83beec', BS = '#0f6cbd', O = '#e07000';
  const p = (d, stroke = K, fill = 'none', w = 1.6) => `<path d="${d}" stroke="${stroke}" fill="${fill}" stroke-width="${w}"/>`;
  const axis = p('M1 0v27h27');
  const bolt = p('M4 0h8l-3 6h4L2 17l2-8H0z', '#d9780f', '#fbd58c', 1.3);
  const word = (s, x, y, size, w, weight = 700) => `<text x="${x}" y="${y}" font-family="Open Sans" font-size="${size}" font-weight="${weight}" fill="#1e88d0" textLength="${w}" lengthAdjust="spacingAndGlyphs">${s}</text>`;
  const icons = [
    axis + p('M2 4h8v6H2z', K, '#fff') + p('M9 4h9v6H9z', BS, B) + p('M2 16h10v6H2z', K, '#fff') + p('M12 16h12v6H12z', GS, G),
    axis + p('M6 18h6v9H6z', K, '#fff') + p('M6 9h6v9H6z', BS, B) + p('M18 16h6v11h-6z', K, '#fff') + p('M18 4h6v12h-6z', GS, G),
    axis + p('M1 2h25v5H1z', BS, B) + p('M1 7h15v5H1z', K, '#fff') + p('M1 14h11v5H1z', GS, G) + p('M1 20h19v5H1z', K, '#fff'),
    axis + p('M3 2h5v25H3z', BS, B) + p('M8 12h5v15H8z', K, '#fff') + p('M15 16h5v11h-5z', GS, G) + p('M21 8h5v19h-5z', K, '#fff'),
    axis + p('M2 4h6v6H2z', K, '#fff') + p('M7 4h17v6H7z', BS, B) + p('M2 16h14v6H2z', K, '#fff') + p('M16 16h8v6h-8z', GS, G),
    axis + p('M6 20h6v7H6z', K, '#fff') + p('M6 4h6v17H6z', BS, B) + p('M18 12h6v15h-6z', K, '#fff') + p('M18 4h6v8h-6z', GS, G),
    axis + p('M1 20l9-9 8-5 9 10', BS) + p('M1 14l10-7 7 8 9-9', K),
    p('M16 14l5-13 6 13v13z', GS, G) + p('M1 17L10 3l10 17-5 7H1z', K, '#fff') + p('M1 17l5 5 11-9 10 14H1z', BS, B),
    p('M2 18l8 6 9-11 8 8v6H2z', 'none', '#fff') + p('M2 6l8 6 9-8 4 5h5v11l-8-6-9 10-9-10z', BS, B) + axis,
    p('M2 18l8 6 9-11 8 8v6H2z', 'none', '#fff') + p('M2 4h26v16l-7-6-11 9-8-10z', BS, B) + axis,
    axis + p('M6 20h6v7H6z', K, '#fff') + p('M6 4h6v17H6z', BS, B) + p('M18 12h6v15h-6z', K, '#fff') + p('M18 4h6v8h-6z', GS, G) + p('M2 24l10-9 6 6 9-9'),
    axis + p('M6 13h6v14H6z', BS, B) + p('M12 3h6v24h-6z', K, '#fff') + p('M18 9h7v18h-7z', GS, G) + p('M2 24l9-9 6 6 10-10'),
    axis + p('M4 18h22v4H4z', O, '#f9b26b') + p('M4 5c7 5 14 4 22-1v6c-8 5-15 4-22 1z', GS, G) + p('M4 11c6-2 6 6 11 6 4 0 5-6 11-5v5c-5-1-6 5-11 5-6 0-5-7-11-6z', BS, B),
    axis + p('M4 9h6v18H4z', K, '#fff') + p('M11 8h4v8h-4z', GS, G) + p('M15 2h4v14h-4z', BS, BS) + p('M19 3h6v24h-6z', K, '#fff'),
    p('M1 2h26v8H1z', BS, B) + p('M4 10h20v8H4z', BS, B) + p('M9 18h10v6H9z', BS, B),
    axis + p('M6 6h4v4H6zM13 11h4v4h-4zM21 17h4v4h-4z', B, B) + p('M20 3h4v4h-4zM6 18h4v4H6z', K, K),
    '<circle cx="14" cy="14" r="13" fill="#fff" stroke="#3b3a39" stroke-width="1.500"/>' + p('M14 14V1a13 13 0 0 1 9 22z', BS, B),
    '<circle cx="14" cy="14" r="10" fill="none" stroke="#797775" stroke-width="7.500"/><circle cx="14" cy="14" r="10" fill="none" stroke="#fff" stroke-width="5"/>' + p('M14 1a13 13 0 1 1-13 13h6a7 7 0 1 0 7-7z', BS, B),
    p('M1 1h26v26H1z', K, '#fff') + p('M1 1h13v14H1zM1 15h13v12H1z', BS, B) + p('M14 9h13M20 9v18M20 18h7') + p('M1 1h26v26H1z'),
    '<circle cx="16" cy="12" r="8" fill="#fff" stroke="#3b3a39" stroke-width="1.500"/>' + p('M11 7l5-1-2 5-3 1zM17 12l5-2-1 6-4 1z', '#1f9a48', '#1f9a48', 1) + p('M13 2C5 3 2 12 6 18s12 6 16 2M15 22v5M5 27h20'),
    p('M1 3h9l2 2h8l7-3v11l-5 8-4 5-2-3-6 2-4-6-3-4z', GS, G) + p('M1 3h9l2 4-1 7H3V8z', BS, B) + p('M3 14h10v5l3 1v3l-6 2-3-5-3-1z', K, G) + p('M16 14l11-1v6l-6 2-3 5-4-4z', BS, B),
    '<path d="M18 0l8 28-9-6-15 3z" fill="#40b4d8"/><path d="M18 0l8 28-9-6z" fill="#1b6fb8"/>',
    p('M1 19a13 11 0 0 1 26 0h-7a6 5 0 0 0-12 0z', K, '#fff') + p('M9 8a13 11 0 0 1 18 11h-7a6 5 0 0 0-6-5z', BS, B) + p('M13 19l8-6-4 6z', K, K),
    p('M1 4h26v20H1z', K, '#fff') + p('M4 21h20', K, 'none', 1.2) + word('123', 4, 18, 14, 20, 400),
    p('M1 1h26v26H1z', K, '#fff') + p('M6 5v17', K, 'none', 1.2) + p('M8 8h15M8 16h15', BS, 'none', 2.5) + p('M8 12h8M8 21h8', GS),
    p('M1 3h26v21H1z', K, '#fff') + p('M5 14l4-7 4 7z', '#1f9a48', '#8fd49f', 1.2) + p('M15 8h8l-4 6z', '#d13438', '#f4a5a8', 1.2) + p('M5 18h18M5 21h6', GS),
    p('M1 1h26v26H1z', K, '#fff') + p('M1 1h26v4H1z', K, G) + p('M6 11h4v4H6zM6 18h4v4H6z', GS, G) + p('M14 14h14v3l-5 5v7h-4v-7l-5-5z', '#f3f2f1', '#f3f2f1', 4) + p('M14 15h13v2l-4 5v6h-4v-6l-5-5z', K, '#fff'),
    p('M1 1h26v26H1z', K, '#fff') + p('M1 1h26v5H1z', K, G) + p('M1 13h26M1 20h26M10 6v21M18 6v21', GS, 'none', 1.2),
    p('M1 1h26v26H1z', K, '#fff') + p('M18 6h9v21H1v-7h17z', BS, B, 1) + p('M1 1h26v5H1z', K, G) + p('M1 13h26M1 20h26M10 6v21M18 6v21', BS, 'none', 1.2) + p('M1 1h26v26H1z'),
    word('R', 5.5, 22, 24, 14), word('Py', 0, 21, 25, 28),
    axis + p('M2 6h18', BS) + '<circle cx="23" cy="6" r="3" fill="#83beec" stroke="#0f6cbd" stroke-width="1.500"/>' + p('M2 13h13M2 19h8', GS) + '<circle cx="17" cy="13" r="2" fill="#fff" stroke="#797775" stroke-width="1.500"/><circle cx="11" cy="19" r="2" fill="#fff" stroke="#797775" stroke-width="1.500"/>',
    p('M10 14h8M18 4h-4v19h4') + p('M1 11h9v6H1zM18 1h9v6h-9zM18 10h9v6h-9zM18 19h9v6h-9z', BS, B),
    p('M1 3h26v17H11l-4 5v-5H1z', BS, '#fff'),
    p('M4 1h12l7 7v19H4z', K, '#fff') + p('M15 1v7h8') + '<circle cx="5" cy="11" r="3" fill="#83beec" stroke="#f3f2f1" stroke-width="5"/><circle cx="5" cy="11" r="2.500" fill="#83beec" stroke="#0f6cbd" stroke-width="1.400"/>' + p('M11 13h9M8 18h9', '#1e88d0', 'none', 1.4),
    p('M7 3H1v5c0 4 2 5 6 5M21 3h6v5c0 4-2 5-6 5') + p('M7 3h14v9c0 3-3 6-5 6v6h-4v-6c-2 0-5-3-5-6z', K, '#fff') + p('M7 1h14v3H7zM8 24h12v3H8z', BS, B),
    p('M3 0h13l7 7v21H3z', K, '#fff') + p('M16 0v7h7') + p('M6 16h4v9H6zM11 20h4v5h-4zM17 12h3v13h-3z', 'none', K),
    p('M11 4h16v20H1v-6', K, '#fff') + word('123', 8, 20, 13, 17, 400) + p('M4 21h20', GS, 'none', 1) + bolt,
    p('M15 2h11v9H15zM2 16h10v9H2z', GS, '#fff') + p('M8 8h5v4H8z', BS, B) + p('M14 14h14v3l-5 5v7h-4v-7l-5-5z', '#f3f2f1', '#f3f2f1', 3) + p('M14 16h13v2l-4 5v6h-4v-6l-5-5z', K, '#fff') + bolt,
    p('M2 2h25v14l-9 2-3 9H2z', BS, '#fff') + p('M20 3h6v12l-8 3-3 9H3v-3l9-3v-7l8-3z', '#83beec', B) + '<path d="M0 0h9v10l-4 6-5-6z" fill="#e07000" stroke="#f3f2f1" stroke-width=".8"/><circle cx="4.500" cy="5" r="2" fill="#fff"/><circle cx="24" cy="25" r="5" fill="#e07000" stroke="#f3f2f1"/><circle cx="27" cy="17" r="2.700" fill="#e07000" stroke="#f3f2f1"/>',
    p('M1 14L12 3l4-1 11 12-11 12-4-1zM12 3l-4 7 12 12M16 2l4 6-12 13M20 8l-9 9M11 10l5 5', '#8f3a9c', 'none', 1.4),
    p('M1 3h17l9 11-9 11H1l9-11zM1 25L18 3M6 25L22 8', '#1a86e0', 'none', 1.6),
  ];
  document.getElementById('visuals').innerHTML = icons.map(i => `<svg class="w-7 h-7 overflow-visible" viewBox="0 0 28 28">${i}</svg>`).join('');
</script>
</body>
</html>
